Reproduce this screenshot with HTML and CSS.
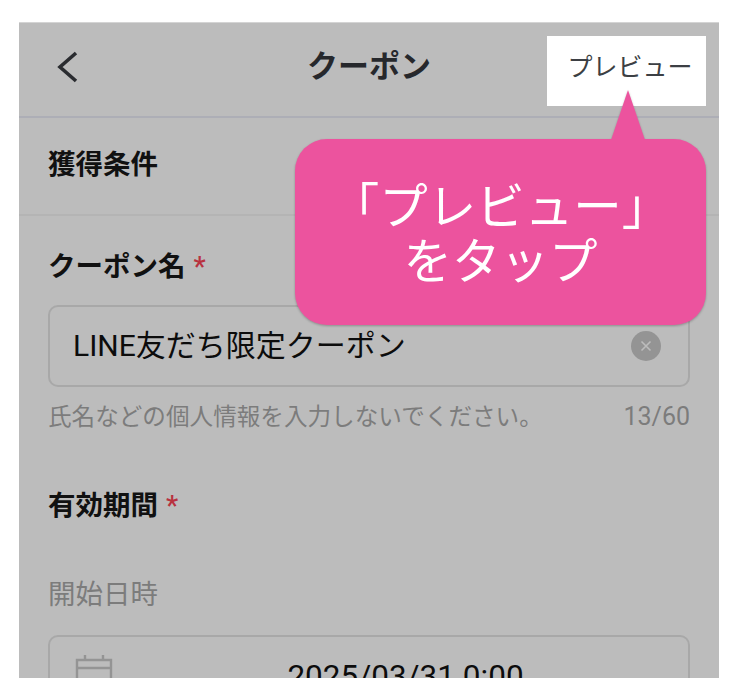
FILE: index.html
```html
<!DOCTYPE html>
<html lang="ja">
<head>
<meta charset="utf-8">
<title>クーポン</title>
<link rel="stylesheet" href="styles.css">
</head>
<body>
<div class="screen">
  <header class="nav">
    <svg class="back" width="40" height="40" viewBox="0 0 40 40"><path d="M19 3 L3 17 L19 31" fill="none" stroke="#2a2c30" stroke-width="3.6"/></svg>
    <h1 class="title">クーポン</h1>
    <div class="preview">プレビュー</div>
  </header>
  <div class="row">獲得条件</div>
  <main class="form">
    <div class="label first">クーポン名<span class="star">*</span></div>
    <div class="input">
      <span class="value">LINE友だち限定クーポン</span>
      <svg class="clear" width="30" height="30" viewBox="0 0 30 30"><circle cx="15" cy="15" r="15" fill="#949494"/><path d="M10.5 10.5 L19.5 19.5 M19.5 10.5 L10.5 19.5" stroke="#bcbcbc" stroke-width="1.6"/></svg>
    </div>
    <div class="hint"><span>氏名などの個人情報を入力しないでください。</span><span class="count">13/60</span></div>
    <div class="label second">有効期間<span class="star">*</span></div>
    <div class="sub">開始日時</div>
    <div class="input date">
      <svg class="cal" width="38" height="40" viewBox="0 0 38 40"><path d="M2 6 H36 V38 H2 Z M2 14 H36 M10 1 V6 M28 1 V6" fill="none" stroke="#949494" stroke-width="2.4"/></svg>
      <span class="date-text">2025/03/31 0:00</span>
    </div>
  </main>
  <div class="callout">
    <span class="tail"></span>
    <p class="callout-text">「プレビュー」<br>をタップ</p>
  </div>
</div>
</body>
</html>
```

FILE: styles.css
```css
* { box-sizing: border-box; }
html, body { margin: 0; padding: 0; background: #fff; }
body { font-family: Roboto, "Noto Sans CJK JP", sans-serif; }
.screen {
  position: relative;
  width: 700px;
  height: 656px;
  margin: 22px 0 0 19px;
  background: #bcbcbc;
  border-top: 1px solid #d4d4d4;
  overflow: hidden;
}
.nav {
  position: relative;
  height: 95px;
  border-bottom: 2px solid #adaeb6;
  display: flex;
  align-items: flex-start;
  justify-content: flex-end;
  padding: 13px 13px 0 0;
}
.back { position: absolute; left: 38px; top: 27px; }
.title {
  position: absolute;
  left: 0;
  right: 0;
  top: 22px;
  margin: 0;
  text-align: center;
  font-size: 31px;
  line-height: 44px;
  font-weight: 700;
  color: #26282c;
}
.preview {
  width: 159px;
  height: 70px;
  padding-left: 7px;
  background: #fff;
  color: #3c3f44;
  font-size: 25px;
  line-height: 64px;
  text-align: center;
}
.row {
  height: 98px;
  padding-left: 29px;
  border-bottom: 2px solid #b4b4b4;
  font-size: 27.5px;
  font-weight: 700;
  line-height: 94px;
  color: #111;
}
.form { padding: 0 29px; }
.label {
  font-size: 27.5px;
  font-weight: 700;
  line-height: 40px;
  color: #111;
}
.label.first { margin-top: 31px; }
.label.second { margin-top: 52px; }
.star { color: #b8323f; margin-left: 8px; font-weight: 500; }
.input {
  display: flex;
  align-items: center;
  justify-content: space-between;
  width: 642px;
  height: 82px;
  margin-top: 18px;
  padding: 0 27px 0 23px;
  border: 2px solid #a8a8a8;
  border-radius: 10px;
}
.value { font-size: 30px; line-height: 40px; margin-bottom: 1px; color: #0c0c0c; white-space: nowrap; }
.hint {
  display: flex;
  justify-content: space-between;
  margin-top: 13px;
  font-size: 23.6px;
  line-height: 34px;
  color: #7c7c7c;
}
.count { font-size: 25px; }
.sub {
  margin-top: 49px;
  font-size: 27.5px;
  line-height: 40px;
  color: #7c7c7c;
}
.input.date {
  position: relative;
  margin-top: 20px;
  height: 90px;
  padding-left: 25px;
  align-items: flex-start;
  justify-content: flex-start;
}
.cal { margin-top: 17px; flex: none; }
.date-text {
  flex: 1;
  margin-left: 37px;
  text-align: center;
  font-size: 31.5px;
  line-height: 40px;
  margin-top: 20px;
  color: #0c0c0c;
  white-space: nowrap;
}
.callout {
  position: absolute;
  left: 276px;
  top: 116px;
  width: 411px;
  height: 186px;
  background: #ec539e;
  border-radius: 32px;
  display: flex;
  align-items: center;
  justify-content: center;
  filter: drop-shadow(0 1px 1px rgba(0,0,0,.25));
}
.tail {
  position: absolute;
  left: 316px;
  top: -49px;
  width: 34px;
  height: 50px;
  background: #ec539e;
  clip-path: polygon(50% 0, 100% 100%, 0 100%);
}
.callout-text {
  margin: 0;
  color: #fff;
  font-size: 48.5px;
  line-height: 55px;
  text-align: center;
  white-space: nowrap;
  font-weight: 400;
  position: relative;
  top: 3px;
}
```
